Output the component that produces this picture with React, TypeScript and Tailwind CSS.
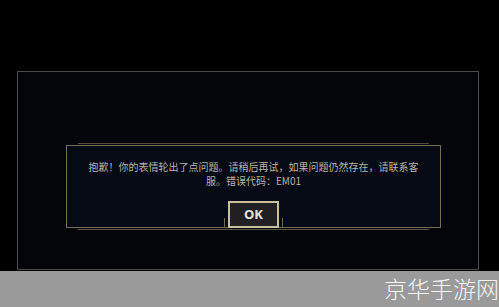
export default function App() {
  return (
    <div className="w-[499px] h-[307px] overflow-hidden flex flex-col bg-black font-['Noto_Sans_CJK_SC',sans-serif]">
      <div className="h-[271px] pt-[71px] pl-[17px]">
        <div className="w-[462px] h-[199px] border border-[#4d4c48] bg-[#04050b] pt-[73px] pl-[48px]">
          <div className="relative w-[375px] h-[83px] border border-[#756d55] bg-[#060a14] flex flex-col items-center pt-[14px] before:content-[''] before:absolute before:left-[11px] before:right-[11px] before:top-[-3px] before:h-px before:bg-[#4f4a3c] after:content-[''] after:absolute after:left-[11px] after:right-[11px] after:bottom-[-3px] after:h-px after:bg-[#5a5444]">
            <p className="text-[10px] leading-[14px] text-[#b8b2a3] text-center whitespace-nowrap">
              抱歉！你的表情轮出了点问题。请稍后再试，如果问题仍然存在，请联系客
            </p>
            <p className="text-[10px] leading-[14px] text-[#b8b2a3] text-center whitespace-nowrap">
              服。错误代码：EM01
            </p>
            <div className="relative mt-auto mb-[-1px] flex">
              <span className="absolute left-[-4px] bottom-0 w-px h-[10px] bg-[#6f6853]" />
              <span className="absolute right-[-4px] bottom-0 w-px h-[10px] bg-[#6f6853]" />
              <button className="w-[51px] h-[27px] border-2 border-[#c9c0a0] bg-[#202024] text-[#e8e4d8] text-[13px] font-bold font-['Open_Sans',sans-serif] leading-none">
                OK
              </button>
            </div>
          </div>
        </div>
      </div>
      <div className="flex-1 bg-[#9a9a9a] flex justify-end items-center">
        <span className="text-[23px] font-light text-[#f4f4f4] mt-[-2px] whitespace-nowrap">
          京华手游网
        </span>
      </div>
    </div>
  );
}
